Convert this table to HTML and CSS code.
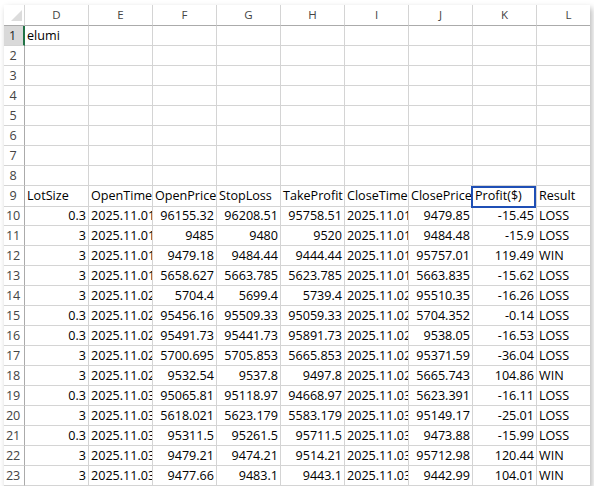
FILE: index.html
```html
<!DOCTYPE html>
<html>
<head>
<meta charset="utf-8">
<link rel="stylesheet" href="styles.css">
</head>
<body>
<div class="sheet">
  <div class="row head">
    <div class="corner"><svg width="11" height="11" viewBox="0 0 11 11"><polygon points="0,11 11,0 11,11" fill="#dcdcdc"/></svg></div>
    <div class="col">D</div><div class="col">E</div><div class="col">F</div><div class="col">G</div><div class="col">H</div><div class="col">I</div><div class="col">J</div><div class="col">K</div><div class="col">L</div>
  </div>
  <div class="row"><div class="rh active">1</div><div class="c">elumi</div><div class="c"></div><div class="c"></div><div class="c"></div><div class="c"></div><div class="c"></div><div class="c"></div><div class="c"></div><div class="c"></div></div>
  <div class="row"><div class="rh">2</div><div class="c"></div><div class="c"></div><div class="c"></div><div class="c"></div><div class="c"></div><div class="c"></div><div class="c"></div><div class="c"></div><div class="c"></div></div>
  <div class="row"><div class="rh">3</div><div class="c"></div><div class="c"></div><div class="c"></div><div class="c"></div><div class="c"></div><div class="c"></div><div class="c"></div><div class="c"></div><div class="c"></div></div>
  <div class="row"><div class="rh">4</div><div class="c"></div><div class="c"></div><div class="c"></div><div class="c"></div><div class="c"></div><div class="c"></div><div class="c"></div><div class="c"></div><div class="c"></div></div>
  <div class="row"><div class="rh">5</div><div class="c"></div><div class="c"></div><div class="c"></div><div class="c"></div><div class="c"></div><div class="c"></div><div class="c"></div><div class="c"></div><div class="c"></div></div>
  <div class="row"><div class="rh">6</div><div class="c"></div><div class="c"></div><div class="c"></div><div class="c"></div><div class="c"></div><div class="c"></div><div class="c"></div><div class="c"></div><div class="c"></div></div>
  <div class="row"><div class="rh">7</div><div class="c"></div><div class="c"></div><div class="c"></div><div class="c"></div><div class="c"></div><div class="c"></div><div class="c"></div><div class="c"></div><div class="c"></div></div>
  <div class="row"><div class="rh">8</div><div class="c"></div><div class="c"></div><div class="c"></div><div class="c"></div><div class="c"></div><div class="c"></div><div class="c"></div><div class="c"></div><div class="c"></div></div>
  <div class="row"><div class="rh">9</div><div class="c">LotSize</div><div class="c">OpenTime</div><div class="c">OpenPrice</div><div class="c">StopLoss</div><div class="c">TakeProfit</div><div class="c">CloseTime</div><div class="c">ClosePrice</div><div class="c selected">Profit($)</div><div class="c">Result</div></div>
  <div class="row"><div class="rh">10</div><div class="c n">0.3</div><div class="c">2025.11.01</div><div class="c n">96155.32</div><div class="c n">96208.51</div><div class="c n">95758.51</div><div class="c">2025.11.01</div><div class="c n">9479.85</div><div class="c n">-15.45</div><div class="c">LOSS</div></div>
  <div class="row"><div class="rh">11</div><div class="c n">3</div><div class="c">2025.11.01</div><div class="c n">9485</div><div class="c n">9480</div><div class="c n">9520</div><div class="c">2025.11.01</div><div class="c n">9484.48</div><div class="c n">-15.9</div><div class="c">LOSS</div></div>
  <div class="row"><div class="rh">12</div><div class="c n">3</div><div class="c">2025.11.01</div><div class="c n">9479.18</div><div class="c n">9484.44</div><div class="c n">9444.44</div><div class="c">2025.11.01</div><div class="c n">95757.01</div><div class="c n">119.49</div><div class="c">WIN</div></div>
  <div class="row"><div class="rh">13</div><div class="c n">3</div><div class="c">2025.11.01</div><div class="c n">5658.627</div><div class="c n">5663.785</div><div class="c n">5623.785</div><div class="c">2025.11.01</div><div class="c n">5663.835</div><div class="c n">-15.62</div><div class="c">LOSS</div></div>
  <div class="row"><div class="rh">14</div><div class="c n">3</div><div class="c">2025.11.02</div><div class="c n">5704.4</div><div class="c n">5699.4</div><div class="c n">5739.4</div><div class="c">2025.11.02</div><div class="c n">95510.35</div><div class="c n">-16.26</div><div class="c">LOSS</div></div>
  <div class="row"><div class="rh">15</div><div class="c n">0.3</div><div class="c">2025.11.02</div><div class="c n">95456.16</div><div class="c n">95509.33</div><div class="c n">95059.33</div><div class="c">2025.11.02</div><div class="c n">5704.352</div><div class="c n">-0.14</div><div class="c">LOSS</div></div>
  <div class="row"><div class="rh">16</div><div class="c n">0.3</div><div class="c">2025.11.02</div><div class="c n">95491.73</div><div class="c n">95441.73</div><div class="c n">95891.73</div><div class="c">2025.11.02</div><div class="c n">9538.05</div><div class="c n">-16.53</div><div class="c">LOSS</div></div>
  <div class="row"><div class="rh">17</div><div class="c n">3</div><div class="c">2025.11.02</div><div class="c n">5700.695</div><div class="c n">5705.853</div><div class="c n">5665.853</div><div class="c">2025.11.02</div><div class="c n">95371.59</div><div class="c n">-36.04</div><div class="c">LOSS</div></div>
  <div class="row"><div class="rh">18</div><div class="c n">3</div><div class="c">2025.11.02</div><div class="c n">9532.54</div><div class="c n">9537.8</div><div class="c n">9497.8</div><div class="c">2025.11.02</div><div class="c n">5665.743</div><div class="c n">104.86</div><div class="c">WIN</div></div>
  <div class="row"><div class="rh">19</div><div class="c n">0.3</div><div class="c">2025.11.03</div><div class="c n">95065.81</div><div class="c n">95118.97</div><div class="c n">94668.97</div><div class="c">2025.11.03</div><div class="c n">5623.391</div><div class="c n">-16.11</div><div class="c">LOSS</div></div>
  <div class="row"><div class="rh">20</div><div class="c n">3</div><div class="c">2025.11.03</div><div class="c n">5618.021</div><div class="c n">5623.179</div><div class="c n">5583.179</div><div class="c">2025.11.03</div><div class="c n">95149.17</div><div class="c n">-25.01</div><div class="c">LOSS</div></div>
  <div class="row"><div class="rh">21</div><div class="c n">0.3</div><div class="c">2025.11.03</div><div class="c n">95311.5</div><div class="c n">95261.5</div><div class="c n">95711.5</div><div class="c">2025.11.03</div><div class="c n">9473.88</div><div class="c n">-15.99</div><div class="c">LOSS</div></div>
  <div class="row"><div class="rh">22</div><div class="c n">3</div><div class="c">2025.11.03</div><div class="c n">9479.21</div><div class="c n">9474.21</div><div class="c n">9514.21</div><div class="c">2025.11.03</div><div class="c n">95712.98</div><div class="c n">120.44</div><div class="c">WIN</div></div>
  <div class="row"><div class="rh">23</div><div class="c n">3</div><div class="c">2025.11.03</div><div class="c n">9477.66</div><div class="c n">9483.1</div><div class="c n">9443.1</div><div class="c">2025.11.03</div><div class="c n">9442.99</div><div class="c n">104.01</div><div class="c">WIN</div></div>
</div>
</body>
</html>
```
FILE: styles.css
```css
html, body {
  margin: 0;
  padding: 0;
  background: #ffffff;
}

.sheet {
  margin: 5px 0 0 4px;
  width: 586px;
  overflow: hidden;
  background: #ffffff;
  box-shadow: 2px 3px 6px rgba(0, 0, 0, 0.28);
  font-family: "Open Sans", "Noto Sans", sans-serif;
  font-size: 12.6px;
  color: #000000;
}

.row {
  display: grid;
  grid-template-columns: 21px repeat(9, 64px);
  height: 20px;
}

.row.head {
  height: 21px;
}

.row > div {
  box-sizing: border-box;
  overflow: hidden;
  white-space: nowrap;
}

.corner {
  border-right: 1px solid #d4d4d4;
  border-bottom: 1px solid #ababab;
  display: flex;
  align-items: flex-end;
  justify-content: flex-end;
  padding: 0 2px 4px 0;
}

.corner svg {
  display: block;
}

.col {
  border-right: 1px solid #d4d4d4;
  border-bottom: 1px solid #ababab;
  text-align: center;
  font-size: 11.5px;
  line-height: 19px;
  color: #444444;
}

.rh {
  border-right: 1px solid #ababab;
  border-bottom: 1px solid #d4d4d4;
  text-align: center;
  padding-right: 2px;
  line-height: 19px;
  color: #444444;
  font-size: 12.6px;
  letter-spacing: -0.3px;
}

.rh.active {
  background: #d9d9d9;
  border-right: 2px solid #217346;
  color: #262626;
}

.c {
  border-right: 1px solid #d4d4d4;
  border-bottom: 1px solid #d4d4d4;
  padding: 0 2px 0 2px;
  line-height: 20px;
}

.c.n {
  text-align: right;
  padding-right: 2px;
}

.c.selected {
  position: relative;
  overflow: visible;
}

.c.selected::after {
  content: "";
  position: absolute;
  left: -2px;
  right: 0;
  top: 0;
  bottom: -2px;
  border: 2px solid #1f4fb5;
}
```
